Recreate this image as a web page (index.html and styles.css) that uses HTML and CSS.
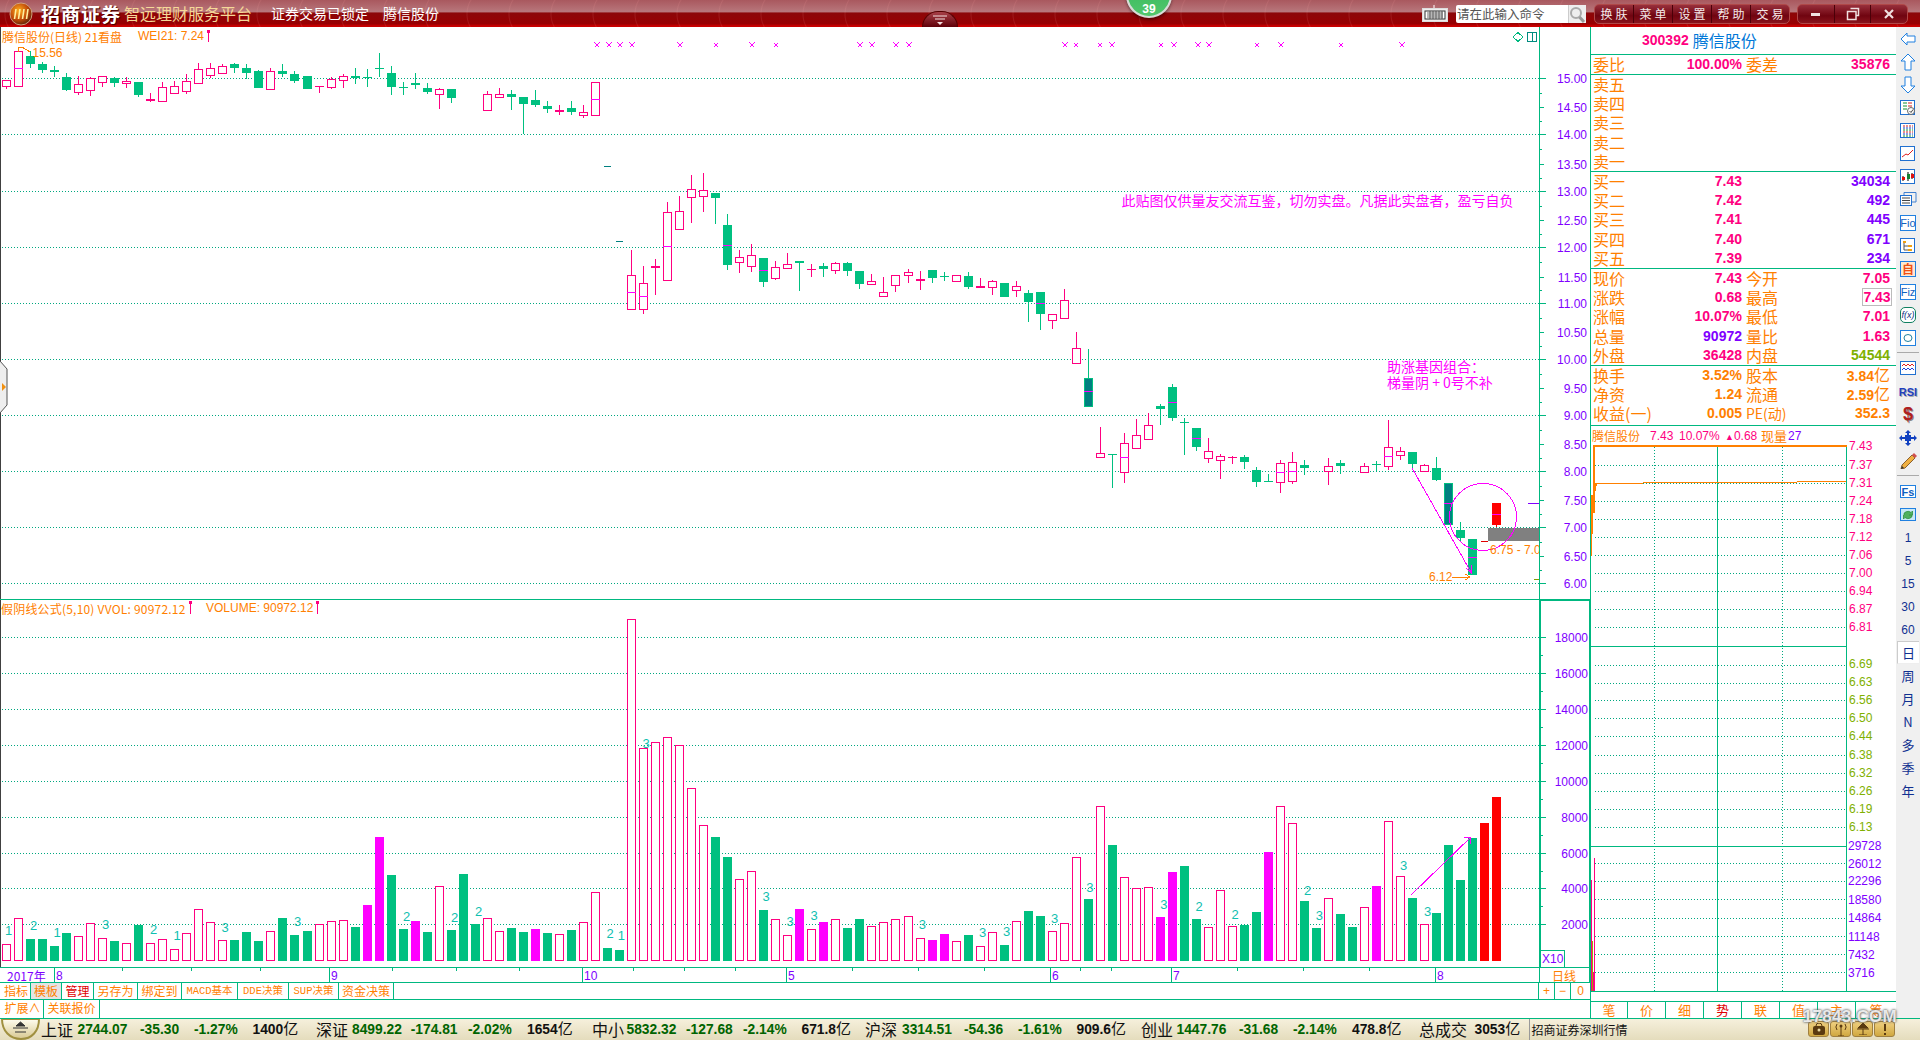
FILE: index.html
```html
<!DOCTYPE html>
<html lang="zh-CN">
<head>
<meta charset="utf-8">
<title>招商证券 智远理财服务平台</title>
<link rel="stylesheet" href="styles.css">
</head>
<body>
<div class="app">
  <header class="topbar">
    <svg class="logo" viewBox="0 0 24 24" width="24" height="24">
      <defs><radialGradient id="lg" cx="40%" cy="35%" r="70%"><stop offset="0" stop-color="#ffb020"/><stop offset=".6" stop-color="#c04808"/><stop offset="1" stop-color="#502008"/></radialGradient></defs>
      <circle cx="12" cy="12" r="11" fill="url(#lg)" stroke="#d0a080"/>
      <path d="M7 7 L5.5 17 M11 7 L9.5 17 M15 7 L13.5 17 M19 7 L17.5 17" stroke="#fff0a0" stroke-width="1.6" fill="none"/>
    </svg>
    <span class="brand">招商证券</span>
    <span class="slogan">智远理财服务平台</span>
    <span class="lock">证券交易已锁定</span>
    <span class="stock">腾信股份</span>
    <div class="ball">39</div>
    <div class="pull"><svg width="18" height="12" viewBox="0 0 18 12"><path d="M2 1H16M4 4H14" stroke="#f4e0e0" stroke-width="1.2"/><path d="M6 7H12L9 10Z" fill="#f4e0e0"/></svg></div>
    <div class="top-right">
      <svg width="26" height="17" viewBox="0 0 26 17"><path d="M12 0V3" stroke="#fff"/><rect x=".5" y="3.5" width="25" height="13" fill="#eee" stroke="#ddd"/><rect x="3" y="6" width="20" height="8" fill="#fff" stroke="#333"/><path d="M5 8H21M5 10H21M5 12H21M8 6V14M11 6V14M14 6V14M17 6V14M20 6V14" stroke="#333" stroke-width=".7"/></svg>
      <div class="cmd"><span class="cmd-text">请在此输入命令</span>
        <svg class="cmd-icon" width="17" height="18" viewBox="0 0 17 18"><circle cx="7" cy="8" r="5" fill="none" stroke="#aaa" stroke-width="2"/><path d="M10.500 12 L15 17" stroke="#999" stroke-width="3"/></svg>
      </div>
      <div class="btn-group"><span>换肤</span><span>菜单</span><span>设置</span><span>帮助</span><span>交易</span></div>
      <div class="win-group">
        <span><svg width="12" height="10" viewBox="0 0 12 10"><rect x="1" y="4" width="9" height="3" fill="#f0e0e0"/></svg></span>
        <span><svg width="14" height="14" viewBox="0 0 14 14"><path d="M4.500 1.500H12.500V8.500H10M1.500 4.500H10V12.500H1.500Z" fill="none" stroke="#f0e0e0" stroke-width="1.500"/></svg></span>
        <span><svg width="12" height="10" viewBox="0 0 12 10"><path d="M2 1L10 9M10 1L2 9" stroke="#f0e0e0" stroke-width="2.200"/></svg></span>
      </div>
    </div>
  </header>

  <main class="main">
    <section class="charts">
      <svg id="chart" class="chart" viewBox="0 27 1590 956" width="1590" height="956"></svg>
      <div class="lefttab"><svg width="9" height="52" viewBox="0 0 9 52"><path d="M0 0 L7 8 V44 L0 52" fill="#eee" stroke="#555"/><path d="M2 22 L6 26 L2 30Z" fill="#f09010"/></svg></div>
      <div class="tabs tabs-a">
        <span>指标</span><span class="active">模板</span><span class="red">管理</span><span class="w44">另存为</span><span class="w44">绑定到</span><span class="w56">MACD基本</span><span class="w51">DDE决策</span><span class="w50">SUP决策</span><span class="w55">资金决策</span>
        <span class="ctl">+</span><span class="ctl">−</span><span class="ctl last">0</span>
      </div>
      <div class="tabs tabs-b"><span class="w42">扩展∧</span><span class="w56">关联报价</span></div>
    </section>

    <aside class="panel">
      <div class="title"><span class="code">300392</span><span class="name">腾信股份</span></div>
      <div class="sec s1"><div class="r"><span class="l">委比</span><span class="v p">100.00%</span><span class="l2">委差</span><span class="v p">35876</span></div></div>
      <div class="sec s5">
        <div class="r"><span class="l">卖五</span></div><div class="r"><span class="l">卖四</span></div><div class="r"><span class="l">卖三</span></div><div class="r"><span class="l">卖二</span></div><div class="r"><span class="l">卖一</span></div>
      </div>
      <div class="sec s5">
        <div class="r"><span class="l">买一</span><span class="v p">7.43</span><span class="l2"></span><span class="v u">34034</span></div>
        <div class="r"><span class="l">买二</span><span class="v p">7.42</span><span class="l2"></span><span class="v u">492</span></div>
        <div class="r"><span class="l">买三</span><span class="v p">7.41</span><span class="l2"></span><span class="v u">445</span></div>
        <div class="r"><span class="l">买四</span><span class="v p">7.40</span><span class="l2"></span><span class="v u">671</span></div>
        <div class="r"><span class="l">买五</span><span class="v p">7.39</span><span class="l2"></span><span class="v u">234</span></div>
      </div>
      <div class="sec s5">
        <div class="r"><span class="l">现价</span><span class="v p">7.43</span><span class="l2">今开</span><span class="v p">7.05</span></div>
        <div class="r"><span class="l">涨跌</span><span class="v p">0.68</span><span class="l2">最高</span><span class="v p"><b class="hl">7.43</b></span></div>
        <div class="r"><span class="l">涨幅</span><span class="v p">10.07%</span><span class="l2">最低</span><span class="v p">7.01</span></div>
        <div class="r"><span class="l">总量</span><span class="v u">90972</span><span class="l2">量比</span><span class="v p">1.63</span></div>
        <div class="r"><span class="l">外盘</span><span class="v p">36428</span><span class="l2">内盘</span><span class="v g">54544</span></div>
      </div>
      <div class="sec s3">
        <div class="r"><span class="l">换手</span><span class="v o">3.52%</span><span class="l2">股本</span><span class="v o">3.84<i>亿</i></span></div>
        <div class="r"><span class="l">净资</span><span class="v o">1.24</span><span class="l2">流通</span><span class="v o">2.59<i>亿</i></span></div>
        <div class="r"><span class="l">收益(一)</span><span class="v o">0.005</span><span class="l2 pe">PE(动)</span><span class="v o">352.3</span></div>
      </div>
      <div class="mini-title"><span class="mt-name">腾信股份</span><span class="mt-p a">7.43</span><span class="mt-p b">10.07%</span><span class="mt-p c"><small>▲</small>0.68</span><span class="mt-o">现量</span><span class="mt-u">27</span></div>
      <svg id="mini" class="mini" viewBox="1591 445 305 556" width="305" height="556"></svg>
      <div class="ptabs"><span>笔</span><span>价</span><span>细</span><span class="red">势</span><span>联</span><span>值</span><span>主</span><span class="wide">筹</span></div>
    </aside>

    <nav class="side">
      <a><svg width="16" height="14" viewBox="0 0 16 14"><path class="ar" d="M1 7 7 1V4H15V10H7V13Z"/></svg></a>
      <a><svg width="16" height="18" viewBox="0 0 16 18"><path class="ar" d="M8 1 15 8H11V17H5V8H1Z"/></svg></a>
      <a><svg width="16" height="18" viewBox="0 0 16 18"><path class="ar" d="M8 17 15 10H11V1H5V10H1Z"/></svg></a>
      <a><svg width="16" height="16" viewBox="0 0 16 16"><rect class="bx" x=".5" y=".5" width="14" height="14"/><path d="M3 3H7M3 6H7M3 9H7" stroke="#109030"/><path d="M8 3H12M8 6H12" stroke="#d02020"/><circle cx="11" cy="11" r="3.500" fill="#fff" stroke="#666"/><path d="M9.500 11 11 12.500 13 9.500" stroke="#444" fill="none"/></svg></a>
      <a><svg width="16" height="16" viewBox="0 0 16 16"><rect class="bx" x=".5" y=".5" width="14" height="14"/><path d="M3 3H13M3 9H13" stroke="#d02020" stroke-dasharray="2 1"/><path d="M3 5H13M3 11H13" stroke="#1040c0" stroke-dasharray="2 1"/><path d="M3 7H13M3 13H13" stroke="#109030" stroke-dasharray="2 1"/></svg></a>
      <a><svg width="16" height="16" viewBox="0 0 16 16"><rect class="bx" x=".5" y=".5" width="14" height="14"/><path d="M2 11 6 8 8 9 13 4" stroke="#e02020" fill="none"/></svg></a>
      <a><svg width="16" height="16" viewBox="0 0 16 16"><rect class="bx" x=".5" y=".5" width="14" height="14"/><path d="M3 7V12M8 3V12M12 4V10" stroke="#000"/><rect x="2" y="8" width="3" height="3" fill="#e01010"/><rect x="7" y="5" width="3" height="5" fill="#108030"/><rect x="11" y="5" width="3" height="4" fill="#e01010"/></svg></a>
      <a><svg width="17" height="15" viewBox="0 0 17 15"><path d="M4 3V.5H16V10H12" fill="none" stroke="#4080d0"/><rect class="bx" x=".5" y="3.500" width="11" height="10"/><path d="M2 6H10M2 8.500H10M2 11H10" stroke="#444"/></svg></a>
      <a><span class="tb">Fio</span></a>
      <a><svg width="16" height="16" viewBox="0 0 16 16"><rect class="bx" x=".5" y=".5" width="14" height="14"/><rect x="3" y="3" width="3" height="2" fill="#f0a010"/><path d="M4 5V12H8M4 8H8" stroke="#555" fill="none"/><rect x="8" y="7" width="4" height="2" fill="#f0a010"/><rect x="8" y="11" width="4" height="2" fill="#f0a010"/></svg></a>
      <a><span class="tb self">自</span></a>
      <a><span class="tb">Fiz</span></a>
      <a><span class="tb fx">f(x)</span></a>
      <a><span class="tb"><svg width="10" height="10" viewBox="0 0 10 10"><ellipse cx="5" cy="5" rx="4" ry="3.500" fill="none" stroke="#2080a0"/></svg></span></a>
      <hr>
      <a><svg width="17" height="15" viewBox="0 0 17 15"><rect class="bx" x=".5" y=".5" width="15" height="13"/><path d="M2 5 4 3 6 5 8 3 10 5 12 3 14 5" stroke="#e02020" fill="none"/><path d="M2 9 4 7 6 9 8 7 10 9 12 7 14 9" stroke="#2040e0" fill="none"/></svg></a>
      <a class="rsi">RSI</a>
      <a class="dollar">$</a>
      <a><svg width="18" height="16" viewBox="0 0 18 16"><path d="M9 0 12 3H6ZM9 16 6 13H12ZM0 8 3 5V11ZM18 8 15 11V5Z" fill="#1040c0"/><rect x="6" y="5" width="6" height="6" fill="#1040c0"/><path d="M3 8H15M9 3V13" stroke="#1040c0" stroke-width="2"/></svg></a>
      <a><svg width="18" height="16" viewBox="0 0 18 16"><path d="M3 12 13 2 16 5 6 15 2 16Z" fill="#f0b040" stroke="#8a6030"/><path d="M13 2 15 0 18 3 16 5Z" fill="#d05050"/><path d="M2 16 3 13 5 15Z" fill="#333"/></svg></a>
      <hr>
      <a><span class="tb fs">Fs</span></a>
      <a><svg width="16" height="14" viewBox="0 0 16 14"><rect x=".5" y=".5" width="15" height="12" fill="#c8e8f8" stroke="#2080e0"/><path d="M4 7A4 3 0 0 1 11 4.500L12.500 3V7H9M12 7A4 3 0 0 1 5 9.500L3.500 11V7" fill="#50b060" stroke="#309040" stroke-width=".8"/></svg></a>
      <a class="tx">1</a><a class="tx">5</a><a class="tx">15</a><a class="tx">30</a><a class="tx">60</a>
      <a class="tx cur">日</a><a class="tx">周</a><a class="tx">月</a><a class="tx">N</a><a class="tx">多</a><a class="tx">季</a><a class="tx">年</a>
    </nav>
  </main>

  <footer class="status">
    <svg class="emblem" width="41" height="21" viewBox="0 0 41 21"><defs><linearGradient id="em" x1="0" y1="0" x2="0" y2="1"><stop offset="0" stop-color="#fffdf0"/><stop offset="1" stop-color="#d8c890"/></linearGradient></defs><path d="M2 0C2 12 10 20 21 20S39 12 39 0Z" fill="url(#em)" stroke="#a09040" stroke-width="2"/><path d="M16 7H25L20.500 3ZM13 9H28M15 13H26" stroke="#333" fill="#333"/></svg>
    <span class="nm">上证</span><span class="ix">2744.07</span><span class="ix">-35.30</span><span class="ix">-1.27%</span><span class="am">1400<i>亿</i></span>
    <span class="nm">深证</span><span class="ix">8499.22</span><span class="ix">-174.81</span><span class="ix">-2.02%</span><span class="am">1654<i>亿</i></span>
    <span class="nm">中小</span><span class="ix">5832.32</span><span class="ix">-127.68</span><span class="ix">-2.14%</span><span class="am">671.8<i>亿</i></span>
    <span class="nm">沪深</span><span class="ix">3314.51</span><span class="ix">-54.36</span><span class="ix">-1.61%</span><span class="am">909.6<i>亿</i></span>
    <span class="nm">创业</span><span class="ix">1447.76</span><span class="ix">-31.68</span><span class="ix">-2.14%</span><span class="am">478.8<i>亿</i></span>
    <span class="nm">总成交</span><span class="am">3053<i>亿</i></span><span class="feed">招商证券深圳行情</span>
    <div class="tray">
      <span><svg width="14" height="12" viewBox="0 0 14 12"><rect x="1" y="3" width="12" height="9" rx="2" fill="#5a3a10"/><circle cx="7" cy="7" r="1.500" fill="#e8d8a0"/><path d="M4 3A3 3 0 0 1 10 3" fill="none" stroke="#5a3a10"/></svg></span>
      <span><svg width="14" height="14" viewBox="0 0 14 14"><path d="M7 5V14M4 14H10" stroke="#5a3a10"/><path d="M3 2A5 5 0 0 0 3 8M11 2A5 5 0 0 1 11 8" fill="none" stroke="#5a3a10"/><circle cx="7" cy="4" r="1.500" fill="#5a3a10"/></svg></span>
      <span><svg width="14" height="12" viewBox="0 0 14 12"><path d="M7 0 12 5H2ZM1 6H13M7 6V12M3 12H11" stroke="#5a3a10" fill="#5a3a10"/></svg></span>
      <span><svg width="4" height="11" viewBox="0 0 4 11"><path d="M2 0V7M2 9V11" stroke="#5a3a10" stroke-width="2"/></svg></span>
    </div>
    <div class="mark">17843.COM</div>
  </footer>
</div>
<script src="app.js"></script>
</body>
</html>
```
FILE: styles.css
```css
* { box-sizing: border-box; }
html, body { margin: 0; padding: 0; width: 1920px; height: 1040px; overflow: hidden; background: #fff; }
body { font-family: "Noto Sans CJK SC", "Liberation Sans", sans-serif; }
.app { display: flex; flex-direction: column; width: 1920px; height: 1040px; }

/* top bar */
.topbar {
  position: relative; display: flex; align-items: center; flex: 0 0 27px; height: 27px; padding-left: 9px; color: #fff;
  background:
    radial-gradient(circle at 32px 14px, transparent 26px, rgba(255,160,160,.13) 27px, transparent 28px) 0 0 / 42px 27px,
    linear-gradient(#a9585e 0, #b8777c 44%, #8c0608 48%, #980002 88%, #d00000 97%, #c00000 100%);
}
.logo { flex: none; }
.brand { margin-left: 8px; font-size: 19px; font-weight: 700; letter-spacing: 1px; width: 83px; white-space: nowrap; line-height: 27px; text-shadow: 1px 1px 1px #400; }
.slogan { font-size: 16px; color: #f5d898; width: 147px; white-space: nowrap; line-height: 27px; }
.lock { font-size: 14px; width: 112px; white-space: nowrap; line-height: 27px; }
.stock { font-size: 14px; white-space: nowrap; line-height: 27px; }
.ball {
  position: absolute; left: 1126px; top: -28px; width: 46px; height: 46px; border-radius: 50%;
  padding-top: 29px; text-align: center; font: 700 12px/12px "Liberation Sans", sans-serif; color: #fff;
  background: linear-gradient(#2fb457, #52c76c); border: 2px solid #d8dcd8; box-shadow: 0 2px 3px rgba(0,0,0,.4); z-index: 3;
}
.pull {
  position: absolute; left: 922px; top: 11px; width: 36px; height: 16px; border-radius: 18px 18px 0 0;
  background: linear-gradient(#a84048, #600008); border: 1px solid #500; border-bottom: 0;
  display: flex; justify-content: center; padding-top: 3px;
}
.top-right { display: flex; align-items: center; margin-left: auto; padding-right: 12px; gap: 8px; height: 27px; }
.cmd { display: flex; align-items: center; justify-content: space-between; width: 130px; height: 18px; background: #fff; border-radius: 2px; }
.cmd-text { font-size: 12.500px; color: #555; line-height: 18px; white-space: nowrap; padding-left: 1px; }
.cmd-icon { background: #eee; width: 18px; height: 18px; border-left: 1px solid #ccc; }
.btn-group, .win-group { display: flex; height: 20px; border: 1px solid #b04848; border-radius: 5px; background: linear-gradient(#98303c, #700410 60%, #88141c); }
.btn-group { width: 196px; }
.btn-group span { flex: 1; font-size: 12px; line-height: 18px; text-align: center; letter-spacing: 3px; padding-left: 3px; color: #f4e8e8; border-right: 1px solid #4a0008; white-space: nowrap; }
.btn-group span:last-child { border-right: 0; }
.win-group { width: 111px; margin-left: -1px; }
.win-group span { flex: 1; display: flex; align-items: center; justify-content: center; border-right: 1px solid #4a0008; }
.win-group span:last-child { border-right: 0; }

/* main */
.main { display: flex; flex: 0 0 991px; height: 991px; }
.charts { position: relative; flex: 0 0 1590px; width: 1590px; display: flex; flex-direction: column; }
.chart { display: block; flex: none; shape-rendering: crispEdges; }
.lefttab { position: absolute; left: 0; top: 334px; width: 9px; height: 52px; }
.lefttab svg { display: block; }

.tabs { display: flex; flex: none; color: #ff8000; font-size: 12px; padding-left: 2px; }
.tabs-a { height: 17px; border-bottom: 1px solid #00b880; }
.tabs-b { height: 18px; }
.tabs span { display: block; width: 29px; border-right: 1px solid #00b880; text-align: center; white-space: nowrap; line-height: 16px; font-size: 12px; }
.tabs .active { background: #e4e4e4; width: 31px; }
.tabs .red { color: #e00000; width: 32px; }
.tabs .w44 { width: 44px; }
.tabs .w56 { width: 56px; font-family: "Liberation Mono", "Noto Sans CJK SC", monospace; font-size: 10.500px; }
.tabs .w51 { width: 51px; font-family: "Liberation Mono", "Noto Sans CJK SC", monospace; font-size: 10.500px; }
.tabs .w50 { width: 50px; font-family: "Liberation Mono", "Noto Sans CJK SC", monospace; font-size: 10.500px; }
.tabs .w55 { width: 55px; }
.tabs .w42 { width: 42px; }
.tabs-b .w56 { font-family: inherit; font-size: 12px; }
.tabs .ctl { width: 16px; flex: none; font-family: "Liberation Sans", sans-serif; }
.tabs span:nth-child(10) { margin-left: auto; border-left: 1px solid #00b880; width: 17px; }
.tabs .ctl.last { width: 19px; border-right: 0; }

/* quote panel */
.panel { flex: 0 0 306px; width: 306px; border-left: 1px solid #00b880; display: flex; flex-direction: column; }
.title { flex: 0 0 28px; height: 28px; border-bottom: 1px solid #00b880; display: flex; align-items: center; padding: 0 0 2px 51px; white-space: nowrap; }
.code { font: 700 14px/24px "Liberation Sans", sans-serif; color: #ff0080; }
.name { font-size: 16px; line-height: 24px; color: #0078d8; margin-left: 4px; }
.sec { flex: none; border-bottom: 1px solid #00b880; display: grid; align-content: start; }
.s1 { height: 20px; grid-auto-rows: 18px; }
.s5 { height: 97px; grid-auto-rows: 19.200px; }
.s3 { height: 60px; grid-auto-rows: 19px; }
.r { display: grid; grid-template-columns: 32px 117px 40px 108px; grid-template-rows: 100%; padding: 0 2px; align-items: center; line-height: 19px; white-space: nowrap; }
.l, .l2 { font-size: 16px; color: #ff8000; line-height: 19px; }
.l2 { padding-left: 4px; }
.l2.pe { font-size: 14px; }
.v { font: 700 14px/19px "Liberation Sans", sans-serif; text-align: right; position: relative; }
.v i { font: 400 16px/1 "Noto Sans CJK SC", sans-serif; }
.p { color: #ff0080; } .u { color: #8000ff; } .o { color: #ff8000; } .g { color: #80b000; }
.hl { display: inline-block; width: 30px; height: 18px; line-height: 17px; text-align: center; border: 1px solid #bbb; margin-right: -2px; background: #fff; }
.mini-title { flex: 0 0 19px; height: 19px; position: relative; font: 12px/20px "Liberation Sans", "Noto Sans CJK SC", sans-serif; white-space: nowrap; display: flex; padding-left: 1px; }
.mt-name { color: #ff8000; width: 58px; font-family: "Noto Sans CJK SC", sans-serif; }
.mt-p { color: #ff0080; }
.mt-p small { font-size: 9px; }
.mt-p.a { width: 29px; } .mt-p.b { width: 46px; } .mt-p.c { width: 36px; }
.mt-o { color: #ff8000; width: 27px; font-family: "Noto Sans CJK SC", sans-serif; font-size: 13px; }
.mt-u { color: #8000ff; }
.mini { display: block; flex: none; shape-rendering: crispEdges; overflow: visible; }
.ptabs { flex: 0 0 17px; display: flex; font-size: 13px; color: #ff8000; border-top: 1px solid #00b880; }
.ptabs span { width: 38px; text-align: center; line-height: 16px; border-right: 1px solid #00b880; }
.ptabs span:first-child { width: 37px; }
.ptabs .wide { width: 40px; border-right: 0; }
.ptabs .red { color: #e00000; }

/* side toolbar */
.side { flex: 0 0 24px; width: 24px; display: flex; flex-direction: column; align-items: center; background: #f0f0f0; }
.side a { flex: 0 0 23px; height: 23px; width: 22px; display: flex; align-items: center; justify-content: center; }
.side hr { flex: none; width: 22px; height: 1px; margin: 3px 0 4px; border: 0; background: #aaa; }
.ar { fill: #fff; stroke: #2080e0; }
.bx { fill: #fff; stroke: #2070d0; }
.tb { display: flex; align-items: center; justify-content: center; width: 16px; height: 16px; background: #fff; border: 1px solid #2080e0; font: 11px/14px "Liberation Sans", sans-serif; color: #1060c0; }
.tb.self { border-color: #2080e0; color: #f05010; font: 700 12px/14px "Noto Sans CJK SC", sans-serif; background: #ffe8d0; }
.tb.fx { border-radius: 5px; border-color: #108060; font-size: 9px; font-style: italic; color: #103080; }
.tb.fs { font-size: 11px; font-weight: 700; height: 13px; }
.rsi { font: 700 11px "Liberation Sans", sans-serif; color: #2040c0; text-shadow: 1px 1px 0 #aaa; }
.dollar { font: 700 18px "Liberation Sans", sans-serif; color: #b02020; text-shadow: 1px 1px 0 #888; }
.tx { font: 12px "Liberation Sans", "Noto Sans CJK SC", sans-serif; color: #103090; }
.tx.cur { background: #fff; border: 1px solid #ccc; border-right: 0; border-bottom-color: #eee; font-size: 13px; }
.tx:nth-last-child(-n+7) { font-family: "Noto Sans CJK SC", sans-serif; font-size: 13px; }

/* status bar */
.status {
  position: relative; flex: 0 0 22px; height: 22px; border-top: 1px solid #00b880; background: linear-gradient(#f6f0dc, #e4dcbc);
  display: grid; align-items: center; white-space: nowrap;
  grid-template-columns: 41px 36.500px 62.500px 54px 58.500px 63.500px 36px 58.700px 57.300px 59px 65px 34.500px 59.500px 57px 58.500px 63.500px 37px 62px 54px 58.500px 64.500px 35.500px 62.500px 54px 59px 67px 55.500px 55px auto;
  grid-template-rows: 21px;
}
.emblem { display: block; }
.nm { font-size: 16px; color: #111; line-height: 21px; }
.ix { font: 700 13.800px/21px "Liberation Sans", sans-serif; color: #006400; }
.am { font: 700 13.800px/21px "Liberation Sans", sans-serif; color: #111; }
.am i { font: 400 15px/1 "Noto Sans CJK SC", sans-serif; }
.feed { font-size: 12px; color: #111; line-height: 21px; border-left: 1px solid #999; padding-left: 1px; }
.tray { position: absolute; right: 25px; top: 2px; display: flex; gap: 1px; }
.tray span { display: flex; align-items: center; justify-content: center; width: 21px; height: 16px; border: 1px solid #a08040; border-radius: 3px; background: linear-gradient(#f0d080, #d0a840); }
.mark { position: absolute; right: 23px; top: -13px; font: 700 17px/22px "Liberation Sans", sans-serif; color: rgba(255,255,255,.85); text-shadow: 0 0 3px #555, 0 0 2px #777; letter-spacing: .3px; pointer-events: none; z-index: 4; }

/* svg text */
.t { font: 12px "Liberation Sans", "Noto Sans CJK SC", sans-serif; dominant-baseline: central; shape-rendering: auto; }
.ax { fill: #8000ff; text-anchor: end; }
.ax0 { fill: #8000ff; }
.or { fill: #ff8000; }
.cj { font-family: "Noto Sans CJK SC", sans-serif; }
.ls { letter-spacing: .2px; }
.mg { fill: #ff00ff; font-size: 14px; font-family: "Noto Sans CJK SC", "Liberation Sans", sans-serif; }
.num3 { fill: #10c0b0; font-size: 13px; text-anchor: middle; }
.up { fill: #ff0080; } .dn { fill: #80b000; } .pu { fill: #8000ff; }
```
FILE: app.js
```js
(function () {
  var GREEN = '#00c080', PINK = '#ff0080', MAG = '#ff00ff', TEAL = '#008080', LINE = '#00b880', DOT = '#00a880', PUR = '#8000ff', ORG = '#ff8000';
  var cx = function (i) { return Math.round(6 + 12.02 * i); };
  var out = [];
  function rect(x, y, w, h, f, extra) { out.push('<rect x="' + x + '" y="' + y + '" width="' + w + '" height="' + h + '" fill="' + f + '"' + (extra || '') + '/>'); }
  function line(x1, y1, x2, y2, c, extra) { out.push('<line x1="' + x1 + '" y1="' + y1 + '" x2="' + x2 + '" y2="' + y2 + '" stroke="' + c + '"' + (extra || '') + '/>'); }
  function text(x, y, s, cls) { out.push('<text class="t ' + cls + '" x="' + x + '" y="' + y + '">' + s + '</text>'); }

  // grid
  [78, 134, 191, 247, 303, 359, 415, 471, 527, 583, 637, 673, 709, 745, 781, 817, 853, 888, 924].forEach(function (y) {
    line(2, y + .5, 1539, y + .5, DOT, ' stroke-dasharray="1 2"');
  });

  // candles: [type, hi, top, bottom, lo, mid] in 1/3 px
  function candle(i, d) {
    if (!d) return;
    var t = d[0], x = cx(i), hi = Math.round(d[1] / 3), top = Math.round(d[2] / 3), bot = Math.round(d[3] / 3), lo = Math.round(d[4] / 3), mid = d[5];
    var h = Math.max(bot - top, 1);
    var c = t === 'g' ? GREEN : t === 'T' ? GREEN : PINK;
    if (t === 'R') c = '#ff0000';
    rect(x, hi, 1, Math.max(lo - hi, 1), c);
    if (t === 'r') out.push('<rect x="' + (x - 3.5) + '" y="' + (top + .5) + '" width="8" height="' + h + '" fill="#fff" stroke="' + PINK + '"/>');
    else if (t === 'T') out.push('<rect x="' + (x - 4) + '" y="' + (top) + '" width="8" height="' + h + '" fill="' + TEAL + '" stroke="' + GREEN + '"/>');
    else rect(x - 4, top, 9, h, c);
    if (mid) rect(x - 4, Math.round(mid / 3), 9, 1, MAG);
  }
  function seg(off, start, rows) {
    rows.forEach(function (r, k) {
      if (!r) return;
      var d = [r[0], r[1] + off, r[2] + off, r[3] + off, r[4] + off, r[5] ? r[5] + off : 0];
      candle(start + k, d);
    });
  }
  seg(0, 0, [
    ['r',241,241,257,267],['r',140,153,257,257,205],['g',153,168,191,204],['g',186,192,209,218],['g',198,210,215,231],
    ['g',220,231,270,273],['r',228,253,277,285],['r',232,235,271,288],['r',229,229,247,261],['g',232,235,249,261],
    ['r',232,244,250,264],['g',246,246,285,291],['k',279,297,302,306],['r',246,262,302,302],['r',243,259,280,280],
    ['r',222,244,272,282],['r',189,208,250,250],['r',189,205,224,235],['r',193,199,220,220],['g',189,192,204,219],
    ['g',192,204,219,237],['g',210,213,264,264],['r',204,214,266,270],['g',192,213,221,232],['g',213,222,243,249],
    ['g',228,228,267,267],['k',258,258,261,279],['r',232,238,260,267],['r',223,229,239,264],['g',204,228,234,252],
    ['g',207,231,233,261],['g',159,204,206,231],['g',198,219,261,285],['g',246,261,263,285],['g',219,249,255,267],
    ['g',249,264,276,282],['r',264,267,281,327],['g',267,267,294,309],null,null,
    ['r',273,283,329,329],['r',264,283,292,292],['g',270,282,291,330],['g',291,291,312,402],['g',270,300,315,321],
    ['g',303,318,327,339],['k',315,330,336,345],['g',303,324,336,345],['r',315,337,344,354],['r',247,247,346,346,298],
    null,null,['r',750,826,928,928,877]
  ]);
  seg(0, 53, [
    ['r',798,850,928,942,889],['k',778,798,803,884],['r',606,637,841,841,739],['r',588,634,688,688],['r',525,568,592,668],
    ['r',519,571,589,635],['g',579,579,593,671],['g',642,675,795,810,736],['r',751,772,785,819],['r',732,766,799,816],
    ['g',774,774,846,861,811],['r',783,802,833,840],['r',759,793,803,807],['g',783,783,789,873],['k',792,807,809,831],
    ['g',789,798,807,831],['r',786,790,809,822],['g',786,789,813,828],['g',813,813,852,867],['r',822,844,851,851],
    ['r',831,877,887,887],['r',826,826,854,876],['r',807,817,826,849],['k',813,837,843,870],['g',810,810,834,849],
    ['g',816,829,831,843],['r',826,826,842,842],['g',816,828,861,867],['k',834,858,863,864],['r',840,844,860,885],
    ['g',849,849,891,891],['r',843,859,869,891],['g',870,879,906,966],['g',876,876,942,990,910],['r',943,943,961,987],
    ['r',867,901,953,953]
  ]);
  seg(960, 89, [
    ['r',36,85,128,128],['T',87,174,257,257,214],['r',321,400,410,410],['g',403,403,406,504],['r',339,370,455,489,412],
    ['r',297,346,383,386],['r',279,316,356,356],['g',252,258,267,315],['g',192,201,294,303,246],['g',295,306,308,405],
    ['g',324,324,381,393,355],['r',354,394,413,429],['r',402,408,419,477],['k',408,411,415,432],['g',405,411,426,447],
    ['g',441,450,486,501],['g',462,483,485,485],['r',420,430,485,519,457],['r',396,427,482,492,454],['g',420,435,444,465],
    null,['r',414,439,452,495],['g',420,429,438,462],null,['r',429,439,455,455],['g',423,432,434,453],
    ['r',300,382,437,450,409],['r',381,394,404,420],['g',396,396,432,450],['r',432,436,452,452],['g',411,444,480,483],
    ['T',489,489,612,612,549],['g',606,630,654,663],['g',657,657,765,765,711],null,['R',549,549,615,621,582]
  ]);
  // stray dashes
  rect(cx(50) - 3, 166, 7, 1, TEAL); rect(cx(51) - 3, 241, 7, 1, TEAL); rect(cx(123) - 3, 541, 7, 1, '#e00000');

  // volume bars
  var vols = 'r944 r918 g939 g939 g946 g933 r936 r923 r938 g941 r943 g925 r943 r939 r949 r933 r909 r922 r940 g940 g932 g941 r931 g918 g935 g931 r924 r921 r920 g927 m905 m837 g875 g929 m921 g932 r886 g930 g874 g924 r918 r931 g928 g932 m929 g933 r934 g930 r922 r892 g948 g950 r619 r748 r742 r737 r745 r788 r825 g837 g857 r879 r871 g910 r919 r935 m909 r929 m922 r919 g928 g919 r926 r922 r919 r916 r938 m940 m934 r941 g935 r946 r932 g945 r921 g911 g916 r931 r923 r857 g899 r806 g845 r877 r888 r887 m917 m872 g866 g919 r927 r890 r926 g925 g912 m852 r806 r823 g901 g928 r898 g914 g927 r907 m886 r821 r876 g898 r924 g913 g845 g880 g838 R823 R797'.split(' ');
  vols.forEach(function (v, i) {
    var t = v[0], y = +v.slice(1), x = cx(i) - 4;
    if (t === 'r') out.push('<rect x="' + (x + .5) + '" y="' + (y + .5) + '" width="8" height="' + (961 - y - 1) + '" fill="#fff" stroke="' + PINK + '"/>');
    else rect(x, y, 9, 961 - y, t === 'g' ? GREEN : t === 'm' ? MAG : '#ff0000');
  });
  // numbers above bars
  [[8.7,930.7,1],[33.7,925.7,2],[57,932.7,1],[105.6,924.3,3],[153.6,929.3,2],[177,935,1],[225,927,3],[297.5,921,3],[406.6,916.7,2],[454.6,917.7,2],[478.6,911.7,2],[610,933,2],[621.4,935,1],[646,743,3],[766,896,3],[790,921.7,3],[814,915.7,3],[922.4,924.3,3],[982.6,932.3,3],[1006.6,931.7,3],[1054.6,918.7,3],[1089.8,887.3,3],[1163.8,904.7,3],[1199,906.7,2],[1235,914,2],[1307.6,890,2],[1319.4,915.3,3],[1403.6,865.7,3],[1427.6,911.7,3]].forEach(function (n) { text(n[0], n[1], n[2], 'num3'); });

  // top signal marks
  [[596.7,1],[608.6,1],[620.4,1],[632,1],[680.4,1],[716,0],[752,1],[776,0],[860.4,1],[872,1],[896,1],[908.6,1],[1064.5,1],[1076,0],[1100,0],[1112,1],[1161,0],[1173.5,1],[1197.6,1],[1209.4,1],[1257,0],[1281,1],[1341,0],[1401.6,1]].forEach(function (m) {
    var x = Math.round(m[0]), r = m[1] ? 2.5 : 2;
    out.push('<path d="M' + (x - r) + ' ' + (45 - r) + 'L' + (x + r) + ' ' + (45 + r) + 'M' + (x + r) + ' ' + (45 - r) + 'L' + (x - r) + ' ' + (45 + r) + '" stroke="' + MAG + '" stroke-width="1.2" fill="none"/>');
    if (m[1]) rect(x - 1, 44, 2, 2, MAG);
  });

  // drawings on the price pane
  rect(1488, 528, 51, 13, '#808080');
  rect(1528, 503, 11, 1, PUR);
  rect(1534, 579, 5, 1, '#80a000');
  out.push('<ellipse cx="1483" cy="517" rx="33.500" ry="33.500" fill="none" stroke="' + MAG + '"/>');
  line(1412, 468, 1472, 574, MAG);
  line(1472, 574, 1471, 565, MAG); line(1472, 574, 1466, 568, MAG);
  line(1452, 577, 1470, 577, ORG); line(1470, 577, 1465, 574, ORG); line(1470, 577, 1465, 580, ORG);
  line(1411, 895, 1471, 837, MAG); line(1471, 837, 1464, 838, MAG); line(1471, 837, 1470, 844, MAG);
  text(1429, 577, '6.12', 'or');
  text(1490, 550, '6.75 - 7.0', 'or');
  text(1121.500, 200, '此贴图仅供量友交流互鉴，切勿实盘。凡据此实盘者，盈亏自负', 'mg');
  text(1387, 366, '助涨基因组合：', 'mg');
  text(1387, 382, '梯量阴 + 0号不补', 'mg');

  // headings
  text(2, 36, '腾信股份(日线) 21看盘', 'or cj');
  text(138, 36, 'WEI21: 7.24', 'or');
  line(208.500, 30, 208.500, 42, PINK); rect(207, 30, 3, 3, PINK);
  out.push('<path d="M18.500 52V47H22L30 52" fill="none" stroke="' + ORG + '"/>');
  text(32.500, 53, '15.56', 'or');
  text(1, 608, '假阴线公式(5,10) VVOL: 90972.12', 'or cj ls');
  line(190.500, 601, 190.500, 614, PINK); rect(189, 601, 3, 3, PINK);
  text(206, 608, 'VOLUME: 90972.12', 'or');
  line(317.500, 601, 317.500, 614, PINK); rect(316, 601, 3, 3, PINK);
  out.push('<path d="M1518 32.500 1523 37 1518 41.500 1513 37Z" fill="none" stroke="#00b880"/>');
  out.push('<rect x="1527.500" y="32.500" width="9" height="9" fill="none" stroke="#008c80"/>');
  line(1532.500, 33, 1532.500, 42, '#008c80');

  // axes
  rect(1540, 27, 50, 956, '#fff');
  rect(0, 27, 1, 940, '#404040');
  rect(1539, 27, 1, 572, LINE);
  rect(1539, 599, 2, 368, LINE);
  rect(0, 599, 1540, 1, LINE);
  rect(1539, 599, 51, 2, LINE);
  rect(1589, 599, 1, 368, LINE);

  var pr = [['15.00',78,6],['14.50',107,4],['14.00',134,6],['13.50',164,4],['13.00',191,6],['12.50',220,4],['12.00',247,6],['11.50',277,4],['11.00',303,6],['10.50',332,4],['10.00',359,6],['9.50',388,4],['9.00',415,6],['8.50',444,4],['8.00',471,6],['7.50',500,4],['7.00',527,6],['6.50',556,4],['6.00',583,6]];
  pr.forEach(function (p, k) {
    rect(1540, p[1], p[2], 1, LINE);
    text(1587, p[1] + .5, p[0], 'ax');
    if (k < pr.length - 1) rect(1540, Math.round((p[1] + pr[k + 1][1]) / 2), 2, 1, LINE);
  });
  var vl = [['18000',637],['16000',673],['14000',709],['12000',745],['10000',781],['8000',817],['6000',853],['4000',888],['2000',924]];
  vl.forEach(function (p, k) {
    rect(1541, p[1], 5, 1, LINE);
    text(1588, p[1] + .5, p[0], 'ax');
    if (k < vl.length - 1) rect(1541, Math.round((p[1] + vl[k + 1][1]) / 2), 2, 1, LINE);
  });
  out.push('<rect x="1540.500" y="950.500" width="24" height="17" fill="#fff" stroke="' + LINE + '"/>');
  text(1542, 959, 'X10', 'ax0');

  // time axis
  rect(0, 967, 1590, 1, LINE); rect(0, 983 - 1, 1590, 1, LINE);
  rect(1539, 968, 1, 15, LINE); rect(1589, 968, 1, 15, LINE);
  text(7, 975, '2017年', 'ax0 cj');
  [[53.6,'8'],[329,'9'],[582,'10'],[786,'5'],[1050,'6'],[1171,'7'],[1435,'8']].forEach(function (m) {
    rect(Math.round(m[0]), 968, 1, 15, LINE);
    text(Math.round(m[0]) + 2, 976, m[1], 'ax0');
  });
  [122,191,260,392,456,519,633,684,735,852,918,984,1080,1111,1237,1303,1369].forEach(function (x) { rect(x, 968, 1, 3, LINE); });
  text(1552, 975, '日线', 'or cj');

  document.getElementById('chart').innerHTML = out.join('');

  // intraday
  out = [];
  var L = 1591, R = 1846;
  [465, 483, 501, 519, 537, 555, 573, 591, 609, 627, 665, 683, 700, 718, 736, 755, 773, 791, 809, 827, 863, 881, 899, 918, 936, 954, 972].forEach(function (y) {
    line(L + 4, y + .5, R, y + .5, DOT, ' stroke-dasharray="1 2"');
  });
  [1654, 1782].forEach(function (x) { line(x + .5, 447, x + .5, 991, DOT, ' stroke-dasharray="1 2"'); });
  rect(1717, 446, 1, 545, LINE);
  rect(L, 646, R - L, 1, LINE); rect(L, 846, R - L, 1, LINE);
  rect(L - 1, 991, 306, 1, LINE);
  rect(L - 1, 445, 1, 546, LINE);
  rect(R, 447, 1, 544, LINE);
  // price
  rect(1595, 445, R - 1595 + 1, 2, ORG);
  rect(1591, 495, 1, 61, ORG); rect(1592, 495, 1, 39, ORG);
  rect(1593, 445, 2, 68, ORG); rect(1595, 483, 1, 8, ORG);
  rect(1597, 483, 46, 1, ORG); rect(1643, 482, 154, 1, ORG); rect(1797, 481, 49, 1, ORG);
  rect(1596, 483, 1, 3, ORG);
  // volume
  rect(1594, 858, 1, 133, PINK); rect(1591, 880, 1, 111, PINK); rect(1592, 941, 1, 50, '#a0a000'); rect(1593, 972, 1, 19, PINK);
  // labels
  var up = ['7.43','7.37','7.31','7.24','7.18','7.12','7.06','7.00','6.94','6.87','6.81'];
  var upY = [446,465,483,501,519,537,555,573,591,609,627];
  up.forEach(function (s, k) { text(1849, upY[k], s, 'up'); });
  var dn = ['6.69','6.63','6.56','6.50','6.44','6.38','6.32','6.26','6.19','6.13'];
  var dnY = [664,682,700,718,736,755,773,791,809,827];
  dn.forEach(function (s, k) { text(1849, dnY[k], s, 'dn'); });
  var vo = ['29728','26012','22296','18580','14864','11148','7432','3716'];
  var voY = [846,864,881,900,918,937,955,973];
  vo.forEach(function (s, k) { text(1848, voY[k], s, 'pu'); });
  document.getElementById('mini').innerHTML = out.join('');
})();
```
